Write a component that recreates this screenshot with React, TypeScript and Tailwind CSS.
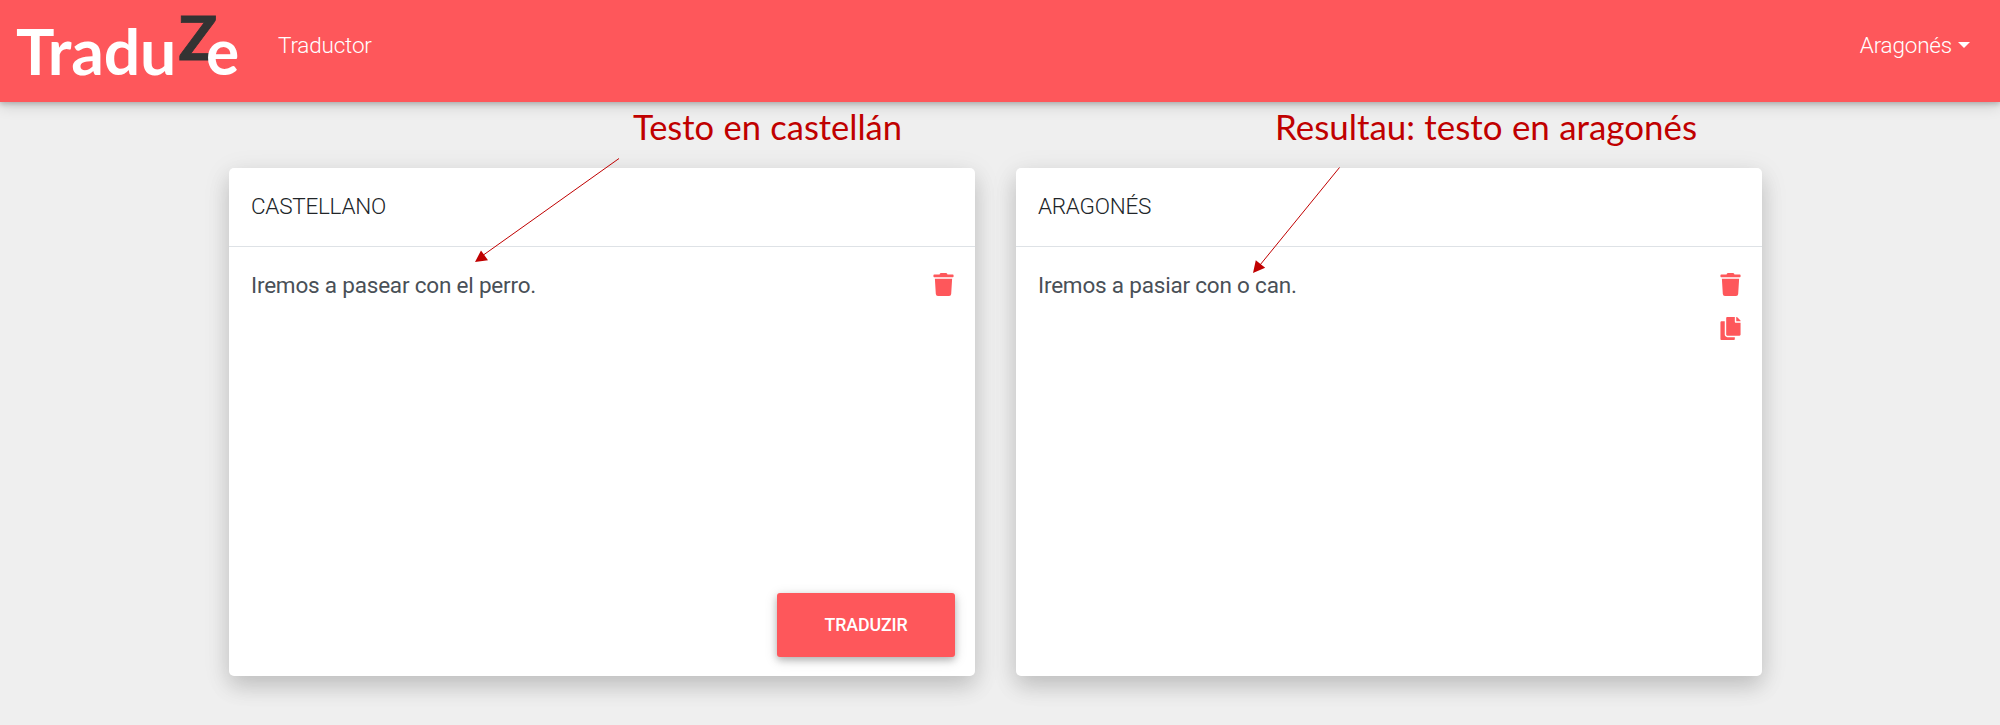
import { FaCopy, FaTrash } from "react-icons/fa";
import type { ReactNode } from "react";

function Logo() {
  return (
    <svg width="240" height="102" viewBox="0 0 240 102" className="block shrink-0 overflow-visible" aria-label="TraduZe">
      <g fontFamily="Lato, sans-serif" fontWeight="700">
        <text x="16" y="75" fontSize="62.5" fill="#fff" textLength="160" lengthAdjust="spacingAndGlyphs">Tradu</text>
        <text x="178.500" y="60" fontSize="61.5" fill="#333" stroke="#333" strokeWidth="0.8" textLength="38.5" lengthAdjust="spacingAndGlyphs">Z</text>
        <text x="206" y="75" fontSize="62.5" fill="#fff" textLength="33" lengthAdjust="spacingAndGlyphs">e</text>
      </g>
    </svg>
  );
}

function Navbar() {
  return (
    <header className="relative z-10 flex h-[102px] items-start bg-[#fe575b] text-[22.5px] font-light tracking-[-0.2px] text-white shadow-[0_2px_5px_0_rgba(0,0,0,0.2),0_4px_14px_0_rgba(0,0,0,0.14)]">
      <Logo />
      <nav className="flex flex-1 items-center justify-between pr-[30px] pl-[38px] pt-[28px] leading-[34px]">
        <a>Traductor</a>
        <button className="flex items-center">
          Aragonés
          <span className="ml-[6px] border-x-[6px] border-t-[6px] border-x-transparent border-t-white" />
        </button>
      </nav>
    </header>
  );
}

function Card({ title, text, icons, children }: { title: string; text: string; icons: ReactNode; children?: ReactNode }) {
  return (
    <section className="flex h-[508px] w-[746px] flex-col rounded-[5px] bg-white shadow-[0_11px_21px_0_rgba(0,0,0,0.13),0_6px_28px_0_rgba(0,0,0,0.1)]">
      <h2 className="h-[79px] border-b border-[#dee2e6] px-[22px] pt-[21px] text-[22.5px] leading-[34px] font-light tracking-[-0.25px] text-[#212529]">{title}</h2>
      <div className="flex flex-1 justify-between pr-[20px] pl-[22px] pt-[21px]">
        <p className="text-[22.5px] leading-[34px] tracking-[-0.2px] text-[#495057]">{text}</p>
        <div className="flex flex-col gap-[21px] pt-[5px] text-[23px] text-[#fe575b]">{icons}</div>
      </div>
      {children}
    </section>
  );
}

function Annotations() {
  return (
    <svg className="pointer-events-none absolute inset-0 z-20" width="2000" height="725" fill="#c00000">
      <g fontFamily="Lato, sans-serif" fontSize="34" wordSpacing="0.5">
        <text x="633" y="140" textLength="269" lengthAdjust="spacingAndGlyphs">Testo en castellán</text>
        <text x="1275" y="140" textLength="422" lengthAdjust="spacingAndGlyphs">Resultau: testo en aragonés</text>
      </g>
      <path d="M619 158.500L482 256M1339.500 167.500L1260 265" stroke="#c00000" strokeWidth="1" fill="none" />
      <path d="M475 262L481 250.500L488 260.200ZM1253 273L1255.800 260.300L1265.200 267.800Z" />
    </svg>
  );
}

export default function App() {
  return (
    <div className="relative h-[725px] w-[2000px] overflow-hidden bg-[#efefef] font-[Roboto,sans-serif]">
      <Navbar />
      <main className="flex gap-[41px] pt-[66px] pl-[229px]">
        <Card title="CASTELLANO" text="Iremos a pasear con el perro." icons={<FaTrash />}>
          <button className="mr-[20px] mb-[19px] h-[64px] w-[178px] self-end rounded-[3px] bg-[#fe575b] pt-px text-[17.8px] font-medium tracking-[-0.1px] text-white shadow-[0_3px_7px_0_rgba(0,0,0,0.22),0_3px_14px_0_rgba(0,0,0,0.14)]">
            TRADUZIR
          </button>
        </Card>
        <Card title="ARAGONÉS" text="Iremos a pasiar con o can." icons={<><FaTrash /><FaCopy /></>} />
      </main>
      <Annotations />
    </div>
  );
}
